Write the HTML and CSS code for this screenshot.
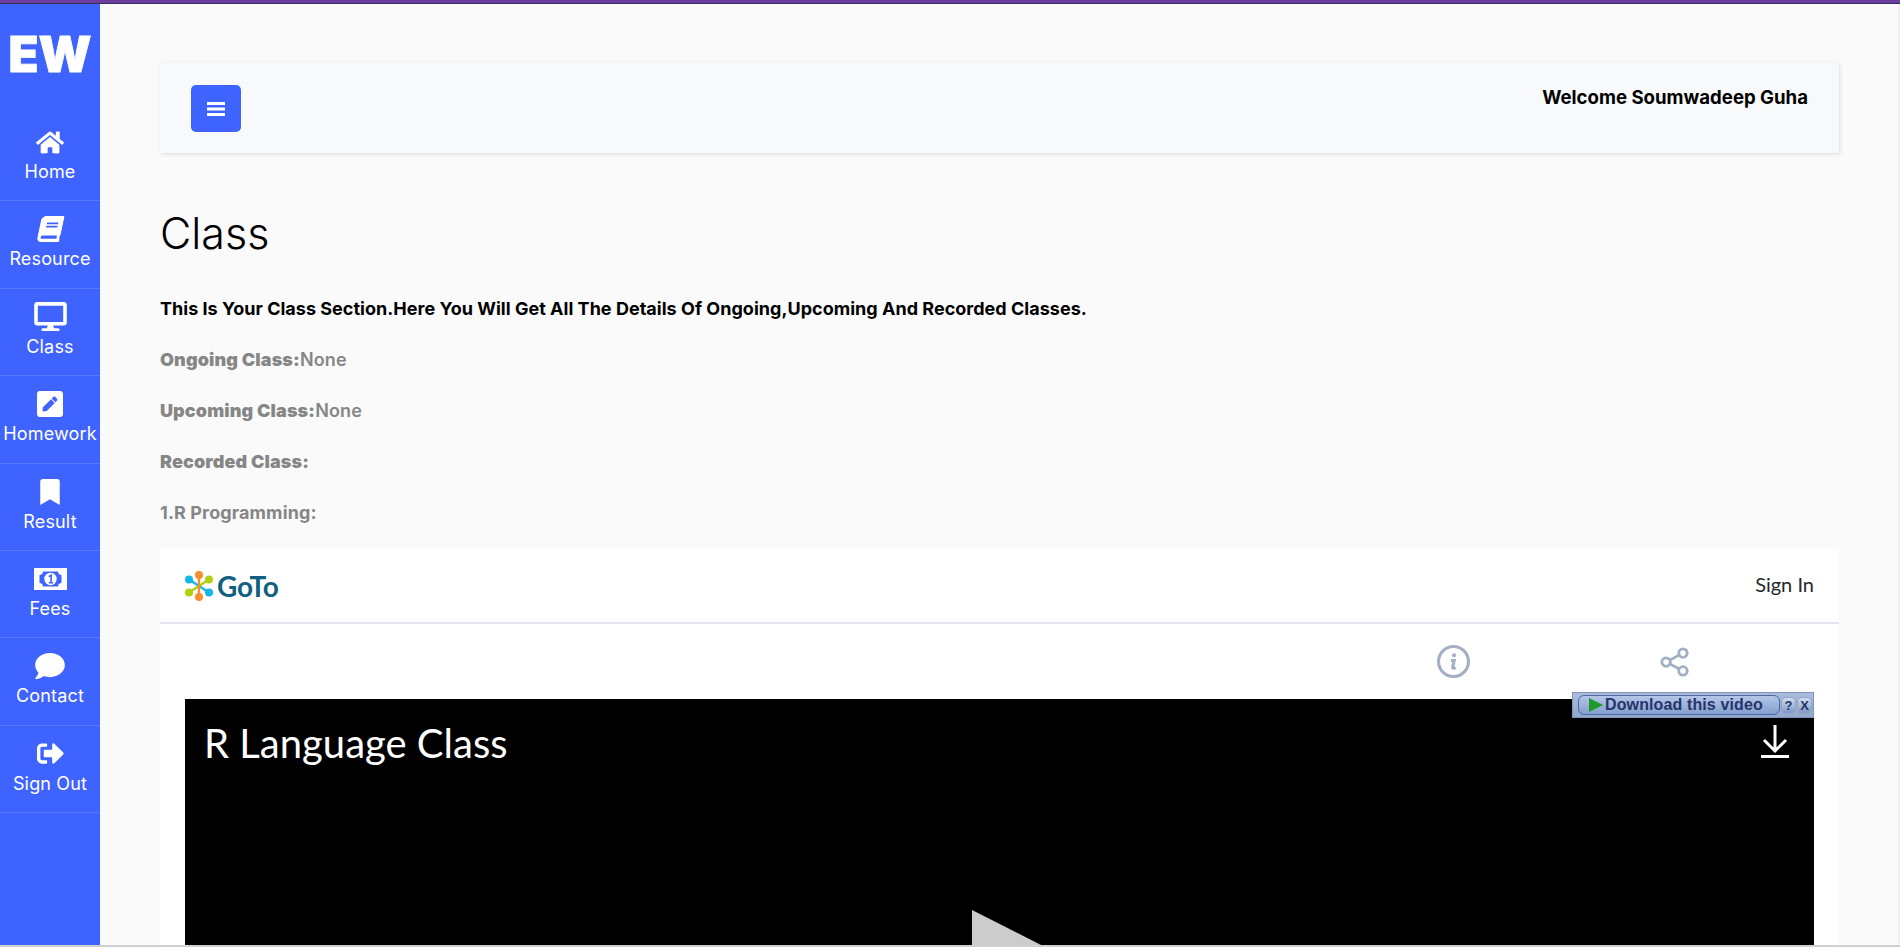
FILE: index.html
```html
<!DOCTYPE html>
<html lang="en">
<head>
<meta charset="utf-8">
<title>Class</title>
<link rel="stylesheet" href="styles.css">
</head>
<body>
<div class="topline"></div>
<div class="shell">
  <aside class="sidebar">
    <div class="logo">EW</div>
    <nav class="nav">
      <a class="nav-item"><span class="nav-icon"><svg class="i-home" viewBox="0 0 576 512"><path d="M280.37 148.26L96 300.11V464a16 16 0 0 0 16 16l112.06-.29a16 16 0 0 0 15.92-16V368a16 16 0 0 1 16-16h64a16 16 0 0 1 16 16v95.64a16 16 0 0 0 16 16.05L464 480a16 16 0 0 0 16-16V300L295.67 148.26a12.19 12.19 0 0 0-15.3 0zM571.6 251.47L488 182.56V44.05a12 12 0 0 0-12-12h-56a12 12 0 0 0-12 12v72.61L318.47 43a48 48 0 0 0-61 0L4.34 251.47a12 12 0 0 0-1.6 16.9l25.5 31A12 12 0 0 0 45.15 301l235.22-193.74a12.19 12.19 0 0 1 15.3 0L530.9 301a12 12 0 0 0 16.9-1.6l25.5-31a12 12 0 0 0-1.7-16.93z"/></svg></span><span class="nav-label">Home</span></a>
      <a class="nav-item"><span class="nav-icon"><svg class="i-book" viewBox="0 0 448 512"><path d="M448 360V24c0-13.3-10.7-24-24-24H96C43 0 0 43 0 96v320c0 53 43 96 96 96h328c13.3 0 24-10.7 24-24v-16c0-7.5-3.5-14.3-8.9-18.7-4.2-15.4-4.2-59.3 0-74.7 5.4-4.3 8.9-11.1 8.9-18.6zM128 134c0-3.3 2.7-6 6-6h212c3.3 0 6 2.7 6 6v20c0 3.3-2.7 6-6 6H134c-3.3 0-6-2.7-6-6v-20zm0 64c0-3.3 2.7-6 6-6h212c3.3 0 6 2.7 6 6v20c0 3.3-2.7 6-6 6H134c-3.3 0-6-2.7-6-6v-20zm253.4 250H96c-17.7 0-32-14.3-32-32 0-17.6 14.4-32 32-32h285.4c-1.9 17.1-1.9 46.9 0 64z"/></svg></span><span class="nav-label">Resource</span></a>
      <a class="nav-item"><span class="nav-icon"><svg class="i-desktop" viewBox="0 0 576 512"><path d="M528 0H48C21.5 0 0 21.5 0 48v320c0 26.5 21.5 48 48 48h192l-16 48h-72c-13.3 0-24 10.7-24 24s10.7 24 24 24h272c13.3 0 24-10.7 24-24s-10.7-24-24-24h-72l-16-48h192c26.5 0 48-21.5 48-48V48c0-26.5-21.5-48-48-48zm-16 352H64V64h448v288z"/></svg></span><span class="nav-label">Class</span></a>
      <a class="nav-item"><span class="nav-icon"><svg class="i-pen" viewBox="0 32 448 448"><path d="M400 480H48c-26.5 0-48-21.5-48-48V80c0-26.5 21.5-48 48-48h352c26.5 0 48 21.5 48 48v352c0 26.5-21.5 48-48 48zM238.1 177.9L102.4 313.6l-6.3 57.1c-.8 7.6 5.6 14.1 13.3 13.3l57.1-6.3L302.2 242c2.3-2.3 2.3-6.1 0-8.5L246.7 178c-2.5-2.4-6.3-2.4-8.6-.1zM345 165.1L314.9 135c-9.4-9.4-24.6-9.4-33.9 0l-23.1 23.1c-2.3 2.3-2.3 6.1 0 8.5l55.5 55.5c2.3 2.3 6.1 2.3 8.5 0L345 199c9.3-9.3 9.3-24.5 0-33.9z"/></svg></span><span class="nav-label">Homework</span></a>
      <a class="nav-item"><span class="nav-icon"><svg class="i-bookmark" viewBox="0 0 384 512"><path d="M0 512V48C0 21.49 21.49 0 48 0h288c26.51 0 48 21.49 48 48v464L192 400 0 512z"/></svg></span><span class="nav-label">Result</span></a>
      <a class="nav-item"><span class="nav-icon"><svg class="i-money" viewBox="0 0 33 22"><path fill-rule="evenodd" d="M0 0h33v22H0zM9 3.500c0 2-1.500 3.500-3.500 3.500v8c2 0 3.500 1.500 3.500 3.500h15c0-2 1.500-3.500 3.500-3.500V7c-2 0-3.500-1.500-3.500-3.500z"/><circle cx="16.500" cy="11" r="6.200"/><path class="money-one" d="M14.800 8.700l2.300-1.500v7.300M14.800 14.700h4.400"/></svg></span><span class="nav-label">Fees</span></a>
      <a class="nav-item"><span class="nav-icon"><svg class="i-comment" viewBox="0 32 512 448"><path d="M256 32C114.6 32 0 125.1 0 240c0 49.6 21.4 95 57 130.7C44.5 421.1 2.700 466 2.200 466.500c-2.200 2.300-2.800 5.700-1.500 8.700S4.800 480 8 480c66.300 0 116-31.800 140.600-51.400 32.700 12.300 69 19.400 107.400 19.400 141.400 0 256-93.100 256-208S397.400 32 256 32z"/></svg></span><span class="nav-label">Contact</span></a>
      <a class="nav-item"><span class="nav-icon"><svg class="i-signout" viewBox="0 64 512 384"><path d="M497 273L329 441c-15 15-41 4.500-41-17v-96H152c-13.300 0-24-10.700-24-24v-96c0-13.300 10.700-24 24-24h136V88c0-21.400 25.900-32 41-17l168 168c9.300 9.400 9.300 24.600 0 34zM192 436v-40c0-6.600-5.400-12-12-12H96c-17.700 0-32-14.300-32-32V160c0-17.700 14.300-32 32-32h84c6.600 0 12-5.400 12-12V76c0-6.600-5.400-12-12-12H96c-53 0-96 43-96 96v192c0 53 43 96 96 96h84c6.600 0 12-5.400 12-12z"/></svg></span><span class="nav-label">Sign Out</span></a>
    </nav>
  </aside>
  <main class="content">
    <header class="navbar">
      <button class="menu-btn" type="button"><svg class="i-bars" viewBox="0 0 18 14"><path d="M0 0h18v3H0zM0 5.500h18v3H0zM0 11h18v3H0z"/></svg></button>
      <div class="welcome">Welcome Soumwadeep Guha</div>
    </header>
    <h1 class="page-title">Class</h1>
    <p class="lead">This Is Your Class Section.Here You Will Get All The Details Of Ongoing,Upcoming And Recorded Classes.</p>
    <p class="status"><b>Ongoing Class:</b>None</p>
    <p class="status"><b>Upcoming Class:</b>None</p>
    <p class="status"><b>Recorded Class:</b></p>
    <p class="status topic">1.R Programming:</p>
    <section class="card">
      <div class="card-head">
        <div class="goto">
          <svg class="goto-mark" viewBox="0 0 28 30">
            <g class="spoke-blue"><path d="M4 8.500L24 21.500"/><circle cx="4" cy="8.500" r="4"/><circle cx="24" cy="21.500" r="4"/></g>
            <g class="spoke-lime"><path d="M4 21.500L24 8.500"/><circle cx="4" cy="21.500" r="4"/><circle cx="24" cy="8.500" r="4"/></g>
            <g class="spoke-orange"><path d="M14 4V26"/><circle cx="14" cy="4" r="4"/><circle cx="14" cy="26" r="4"/></g>
          </svg>
          <span class="goto-word">GoTo</span>
        </div>
        <a class="signin">Sign In</a>
      </div>
      <div class="card-body">
        <div class="actions">
          <span class="action"><svg class="i-action" viewBox="0 0 32 32"><circle class="ring" cx="16" cy="16" r="14.500"/><circle class="dot" cx="16.500" cy="10" r="2"/><path class="ring" d="M13.500 15h3.200l-1.500 6.500c-.3 1.300 1.300 1.500 2.800.2"/></svg></span>
          <span class="action"><svg class="i-share" viewBox="0 0 32 32"><g class="ring"><circle cx="6.500" cy="16" r="4.500"/><circle cx="24.500" cy="6.500" r="4.500"/><circle cx="24.500" cy="25.500" r="4.500"/><path d="M10.500 14l10-5.500M10.500 18l10 5.500"/></g></svg></span>
        </div>
        <div class="video">
          <div class="video-head">
            <span class="video-title">R Language Class</span>
            <svg class="i-download" viewBox="0 0 28 33"><path d="M14 0v26M3 15l11 11 11-11M0 31.500h28"/></svg>
          </div>
          <div class="play"></div>
          <div class="dl-popup">
            <span class="dl-btn"><span class="dl-arrow"></span>Download this video</span>
            <span class="dl-small">?</span>
            <span class="dl-small">X</span>
          </div>
        </div>
      </div>
    </section>
  </main>
</div>
<div class="bottomline"></div>
</body>
</html>
```
FILE: styles.css
```css
* { box-sizing: border-box; }
html, body { margin: 0; height: 947px; overflow: hidden; }
body {
  display: flex;
  flex-direction: column;
  font-family: Inter, "Liberation Sans", sans-serif;
  background: #fafafa;
}
.topline { flex: none; height: 4px; background: #6a3d9e; border-bottom: 1px solid #3b2a5e; }
.bottomline { flex: none; height: 2px; background: #d0d0d0; }
.shell { flex: 1; min-height: 0; display: flex; }

.sidebar { flex: none; width: 100px; background: #3f63ff; color: #fff; }
.logo {
  height: 110px;
  padding-top: 21px;
  text-align: center;
  font-size: 49px;
  line-height: 60px;
  font-weight: 900;
  -webkit-text-stroke: .8px #fff;
}
.nav-item {
  display: flex;
  flex-direction: column;
  align-items: center;
  height: 87.4px;
  padding-top: 13px;
  border-bottom: 1px solid rgba(255, 255, 255, .13);
}
.nav-icon { height: 30px; display: flex; align-items: center; justify-content: center; }
.nav-icon svg { display: block; fill: #fff; }
.nav-label { font-size: 18px; line-height: 30px; white-space: nowrap; letter-spacing: .15px; }
.i-home { width: 28px; height: 25px; }
.i-book { width: 23px; height: 26px; transform: skewX(-12deg); }
.i-desktop { width: 33px; height: 29px; }
.i-pen { width: 26px; height: 26px; }
.i-bookmark { width: 22px; height: 26px; }
.i-money { width: 33px; height: 22px; }
.i-money circle { fill: #fff; }
.money-one { fill: none; stroke: #3f63ff; stroke-width: 1.6; }
.i-comment { width: 30px; height: 26px; }
.i-signout { width: 27px; height: 21px; }

.content {
  flex: 1;
  min-width: 0;
  padding: 59px 59px 0 60px;
  border-right: 2px solid #f0f0f0;
  overflow: hidden;
}
.navbar {
  height: 90px;
  display: flex;
  justify-content: space-between;
  align-items: flex-start;
  padding: 22px 31px 0 31px;
  background: #f8f9fa;
  box-shadow: 1px 1px 4px rgba(0, 0, 0, .12);
}
.menu-btn {
  width: 50px;
  height: 47px;
  border: 0;
  border-radius: 5px;
  background: #3f63ff;
  display: flex;
  align-items: center;
  justify-content: center;
  padding: 0;
}
.i-bars { width: 18px; height: 14px; fill: #fff; display: block; }
.welcome { font-size: 18.6px; font-weight: 700; line-height: 24px; color: #000; }

.page-title { margin: 53px 0 0; font-size: 43px; line-height: 54px; font-weight: 300; color: #000; }
.lead, .status { margin: 0; font-size: 18px; line-height: 26px; padding-top: 25px; white-space: nowrap; }
.lead { font-weight: 700; color: #000; margin-top: 36px; padding-top: 0; letter-spacing: .02px; }
.status { font-weight: 600; color: #868686; letter-spacing: .12px; }
.status b { font-weight: 900; }
.topic { font-weight: 700; }

.card { margin-top: 22px; background: #fff; }
.card-head {
  height: 76px;
  display: flex;
  justify-content: space-between;
  align-items: center;
  padding: 0 25px 2px;
  border-bottom: 2px solid #e4e6ef;
}
.goto { display: flex; align-items: center; gap: 4px; padding-top: 3px; }
.goto-mark { width: 28px; height: 30px; display: block; }
.goto-mark path { fill: none; stroke-width: 2.4; }
.spoke-blue path { stroke: #13b5ea; } .spoke-blue circle { fill: #13b5ea; }
.spoke-lime path { stroke: #b5cf0f; } .spoke-lime circle { fill: #b5cf0f; }
.spoke-orange path { stroke: #f68d2e; } .spoke-orange circle { fill: #f68d2e; }
.goto-word { font-family: Lato, sans-serif; font-weight: 700; font-size: 28px; line-height: 30px; color: #12607f; letter-spacing: -.2px; }
.signin { font-family: Lato, sans-serif; font-size: 20px; color: #25282d; }

.card-body { padding: 0 25px; }
.actions {
  height: 75px;
  display: grid;
  grid-template-columns: 221px 221px;
  justify-content: end;
  align-items: center;
  padding-right: 29px;
}
.action { display: flex; justify-content: center; }
.i-action { width: 33px; height: 33px; display: block; }
.i-share { width: 30px; height: 30px; display: block; }
.ring { fill: none; stroke: #a3afc4; stroke-width: 3; }
.dot { fill: #a3afc4; }

.video { position: relative; height: 400px; background: #000; }
.video-head { display: flex; justify-content: space-between; align-items: flex-start; padding: 20px 25px 0 19px; }
.video-title { font-family: Lato, sans-serif; font-size: 40px; line-height: 48px; color: #fff; }
.i-download { width: 28px; height: 33px; margin-top: 6px; fill: none; stroke: #fff; stroke-width: 3; display: block; }
.play {
  position: absolute;
  left: 787px;
  top: 211px;
  border-top: 80px solid transparent;
  border-bottom: 80px solid transparent;
  border-left: 158px solid #ccc;
}
.dl-popup {
  position: absolute;
  right: 0;
  top: -7px;
  width: 242px;
  height: 26px;
  display: flex;
  align-items: center;
  gap: 1px;
  padding: 0 1px 0 5px;
  background: linear-gradient(#a9bcdc, #93a7cb);
  border: 1px solid #8094bd;
  font-family: "Liberation Sans", sans-serif;
}
.dl-btn {
  flex: 1;
  height: 20px;
  display: flex;
  align-items: center;
  gap: 2px;
  padding-left: 10px;
  border: 1px solid #4f689f;
  border-radius: 6px;
  background: linear-gradient(#b3c6e6, #84a0cf);
  font-size: 16px;
  font-weight: 700;
  letter-spacing: .12px;
  color: #27346b;
  white-space: nowrap;
}
.dl-arrow {
  width: 0;
  height: 0;
  border-top: 7px solid transparent;
  border-bottom: 7px solid transparent;
  border-left: 14px solid #1f9a2a;
}
.dl-small {
  width: 15px;
  height: 17px;
  text-align: center;
  font-size: 13px;
  line-height: 15px;
  font-weight: 700;
  color: #27346b;
  border-radius: 5px;
  border: 1px solid #8ea3c9;
  background: linear-gradient(#d3deef, #7f97c4);
}
```
